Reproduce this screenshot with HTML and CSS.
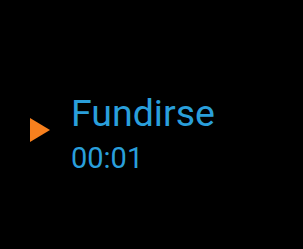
FILE: index.html
```html
<!DOCTYPE html>
<html>
<head>
<meta charset="utf-8">
<link rel="stylesheet" href="styles.css">
</head>
<body>
<div class="screen">
  <div class="row">
    <svg class="play" width="20" height="24" viewBox="0 0 20 24"><polygon points="0,0 20,12 0,24" fill="#f7801e"/></svg>
    <div class="info">
      <div class="title">Fundirse</div>
      <div class="time">00:01</div>
    </div>
  </div>
</div>
</body>
</html>
```
FILE: styles.css
```css
html, body {
  margin: 0;
  padding: 0;
  background: #000;
}
.screen {
  width: 303px;
  height: 249px;
  box-sizing: border-box;
  padding-top: 91px;
  font-family: Roboto, "Noto Sans", sans-serif;
}
.row {
  display: flex;
  align-items: flex-start;
  padding-left: 30px;
}
.play {
  display: block;
  margin-top: 27px;
  margin-right: 21px;
}
.info {
  display: flex;
  flex-direction: column;
  color: #2a9fdb;
}
.title {
  font-size: 37.5px;
  line-height: 44px;
}
.time {
  font-size: 29px;
  line-height: 46px;
}
```
